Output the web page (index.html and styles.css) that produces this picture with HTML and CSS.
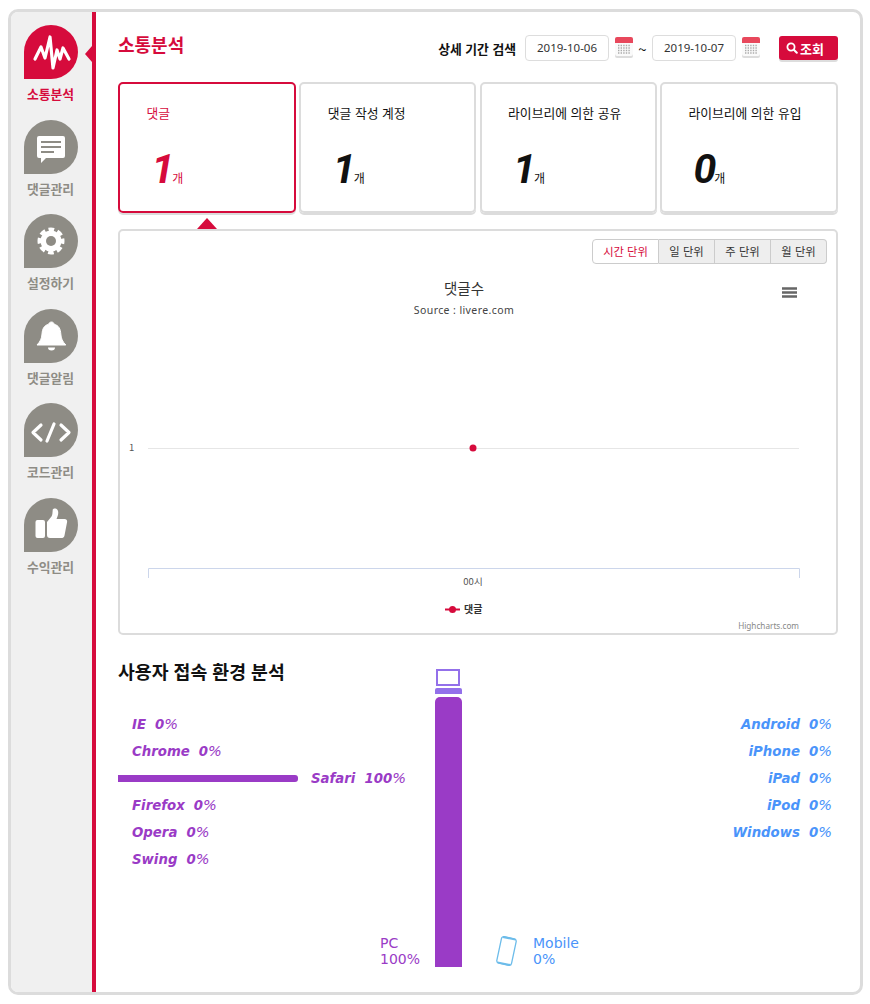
FILE: index.html
```html
<!DOCTYPE html>
<html lang="ko">
<head>
    <meta charset="UTF-8">
    <meta name="viewport" content="width=device-width, initial-scale=1.0">
    <title>소통분석</title>
    <link rel="stylesheet" href="styles.css">
</head>
<body>
    <svg class="defs" width="0" height="0">
        <symbol id="calendar" viewBox="0 0 18 22">
            <rect x="0" y="1" width="18" height="20" rx="2" fill="#dcdcdc"/>
            <rect x="0" y="0" width="18" height="19" rx="2" fill="#fafafa"/>
            <path d="M0 6V2a2 2 0 0 1 2-2h14a2 2 0 0 1 2 2v4z" fill="#e8485c"/>
            <path d="M3 8.5h12M3 11h12M3 13.500h12M3 16h12" stroke="#aaa" stroke-width="1.400" stroke-dasharray="1.400 1.200"/>
        </symbol>
    </svg>

    <div class="frame">
        <nav class="sidebar">
            <a class="nav-item active">
                <span class="nav-icon">
                    <svg viewBox="0 0 54 54"><polyline points="11,34 17,22 21,33 26,12 29,43 33,25 36,34 39,23 45,34" fill="none" stroke="#fff" stroke-width="3.200" stroke-linejoin="round" stroke-linecap="round"/></svg>
                </span>
                <span>소통분석</span>
            </a>
            <a class="nav-item">
                <span class="nav-icon">
                    <svg viewBox="0 0 54 54">
                        <path d="M15 16h24a2 2 0 0 1 2 2v18a2 2 0 0 1-2 2H22l-5 5v-5h-2a2 2 0 0 1-2-2V18a2 2 0 0 1 2-2z" fill="#fff"/>
                        <path d="M17 22h20M17 27h20M17 32h13" stroke="#8e8c85" stroke-width="2"/>
                    </svg>
                </span>
                <span>댓글관리</span>
            </a>
            <a class="nav-item">
                <span class="nav-icon">
                    <svg viewBox="0 0 54 54">
                        <circle cx="27" cy="27" r="10.500" fill="#fff"/>
                        <circle cx="27" cy="27" r="11.500" fill="none" stroke="#fff" stroke-width="4" stroke-dasharray="5.600 3.430" stroke-dashoffset="2.800"/>
                        <circle cx="27" cy="27" r="5" fill="#8e8c85"/>
                    </svg>
                </span>
                <span>설정하기</span>
            </a>
            <a class="nav-item">
                <span class="nav-icon">
                    <svg viewBox="0 0 54 54">
                        <path d="M27.500 13c1.500 0 2.500 1 2.500 2.200 5 1.200 6.500 5 6.800 9.800.3 4.500 1.700 7.500 5 11H13c3.300-3.500 4.700-6.500 5-11 .3-4.800 1.800-8.600 6.800-9.800 0-1.200 1.200-2.200 2.700-2.200z" fill="#fff" stroke="#fff" stroke-linejoin="round"/>
                        <path d="M24 38.500h7a3.500 3 0 0 1-7 0z" fill="#fff"/>
                    </svg>
                </span>
                <span>댓글알림</span>
            </a>
            <a class="nav-item">
                <span class="nav-icon">
                    <svg viewBox="0 0 54 54"><path d="M17 22l-8 7.500 8 7.500M30 21l-7 17M37 22l8 7.500-8 7.500" fill="none" stroke="#fff" stroke-width="3.200" stroke-linecap="round" stroke-linejoin="round"/></svg>
                </span>
                <span>코드관리</span>
            </a>
            <a class="nav-item">
                <span class="nav-icon">
                    <svg viewBox="0 0 54 54">
                        <rect x="11.500" y="22" width="9.500" height="18" rx="2" fill="#fff"/>
                        <path d="M23 24l4.500-5.500c1-1.500 1-4 1.200-6.500.1-2 4.300-2.300 5.300 1 .8 2.800-.5 6-1.500 8h8c2.500 0 3 2 2.400 4l-2.400 12.500c-.4 2-1.500 2.500-3.500 2.500H26c-2 0-3-1-3-3z" fill="#fff"/>
                    </svg>
                </span>
                <span>수익관리</span>
            </a>
        </nav>

        <main class="main">
            <header class="top">
                <h1 class="page-title">소통분석</h1>
                <div class="search">
                    <span class="search-label">상세 기간 검색</span>
                    <span class="date-input">2019-10-06</span>
                    <svg class="cal-icon"><use href="#calendar"/></svg>
                    <span class="tilde">~</span>
                    <span class="date-input">2019-10-07</span>
                    <svg class="cal-icon"><use href="#calendar"/></svg>
                    <button class="search-btn" type="button">
                        <svg viewBox="0 0 12 12" width="12" height="12"><circle cx="5" cy="5" r="3.600" fill="none" stroke="#fff" stroke-width="1.800"/><path d="M7.800 7.800l3 3" stroke="#fff" stroke-width="2" stroke-linecap="round"/></svg>
                        조회
                    </button>
                </div>
            </header>

            <section class="cards">
                <div class="card active">
                    <div class="card-label">댓글</div>
                    <div class="card-value"><b>1</b><span>개</span></div>
                </div>
                <div class="card">
                    <div class="card-label">댓글 작성 계정</div>
                    <div class="card-value"><b>1</b><span>개</span></div>
                </div>
                <div class="card">
                    <div class="card-label">라이브리에 의한 공유</div>
                    <div class="card-value"><b>1</b><span>개</span></div>
                </div>
                <div class="card">
                    <div class="card-label">라이브리에 의한 유입</div>
                    <div class="card-value"><b>0</b><span>개</span></div>
                </div>
            </section>

            <section class="chart-box">
                <div class="tabs">
                    <span class="tab active">시간 단위</span>
                    <span class="tab">일 단위</span>
                    <span class="tab">주 단위</span>
                    <span class="tab">월 단위</span>
                </div>
                <svg class="chart" width="716" height="369" viewBox="0 0 716 369">
                    <text x="344" y="30" text-anchor="middle" class="chart-title">댓글수</text>
                    <text x="344" y="50" text-anchor="middle" class="chart-sub">Source : livere.com</text>
                    <path d="M662 24.500h15M662 28.500h15M662 32.500h15" stroke="#666" stroke-width="2.400"/>
                    <text x="9" y="187" class="chart-small">1</text>
                    <path d="M28 184.500h651" stroke="#e6e6e6"/>
                    <circle cx="353" cy="184" r="3.500" fill="#d60b3c"/>
                    <path d="M28.500 314v-9.500h651v9.500" fill="none" stroke="#ccd6eb"/>
                    <text x="353" y="321" text-anchor="middle" class="chart-small">00시</text>
                    <path d="M325 345.500h15" stroke="#d60b3c" stroke-width="2"/>
                    <circle cx="332.500" cy="345.500" r="3.500" fill="#d60b3c"/>
                    <text x="344" y="349" class="chart-legend">댓글</text>
                    <text x="679" y="365" text-anchor="end" class="chart-credit">Highcharts.com</text>
                </svg>
            </section>

            <section class="env">
                <div class="env-left">
                    <h2 class="env-title">사용자 접속 환경 분석</h2>
                    <ul class="stat-list">
                        <li><b>IE</b><span><b>0</b>%</span></li>
                        <li><b>Chrome</b><span><b>0</b>%</span></li>
                        <li class="has-bar"><i class="stat-bar"></i><b>Safari</b><span><b>100</b>%</span></li>
                        <li><b>Firefox</b><span><b>0</b>%</span></li>
                        <li><b>Opera</b><span><b>0</b>%</span></li>
                        <li><b>Swing</b><span><b>0</b>%</span></li>
                    </ul>
                    <div class="total total-pc">PC<br>100%</div>
                </div>
                <div class="env-center">
                    <svg class="laptop" width="27" height="25" viewBox="0 0 27 25">
                        <rect x="2" y="1" width="22" height="15" fill="none" stroke="#9370ea" stroke-width="2"/>
                        <path d="M2 19h23a2 2 0 0 1 2 2v4H0v-4a2 2 0 0 1 2-2z" fill="#9370ea"/>
                    </svg>
                    <div class="env-bar"></div>
                </div>
                <div class="env-right">
                    <ul class="stat-list blue">
                        <li><b>Android</b><span><b>0</b>%</span></li>
                        <li><b>iPhone</b><span><b>0</b>%</span></li>
                        <li><b>iPad</b><span><b>0</b>%</span></li>
                        <li><b>iPod</b><span><b>0</b>%</span></li>
                        <li><b>Windows</b><span><b>0</b>%</span></li>
                    </ul>
                    <div class="mobile">
                        <svg width="23" height="30" viewBox="0 0 23 30">
                            <g transform="rotate(12 11.500 15)" fill="none" stroke="#6cbcea">
                                <rect x="4" y="1.500" width="15" height="27" rx="2.500" stroke-width="1.300"/>
                                <path d="M5 2h13M5 28h13" stroke-width="2"/>
                            </g>
                        </svg>
                        <div class="total">Mobile<br>0%</div>
                    </div>
                </div>
            </section>
        </main>
    </div>
</body>
</html>
```

FILE: styles.css
```css
* { box-sizing: border-box; }
body { margin: 9px 7px 9px 8px; background: #fff; font-family: "Noto Sans CJK KR", "Noto Sans", sans-serif; color: #111; }
.defs { position: absolute; }
.frame { display: flex; width: 855px; height: 986px; border: 3px solid #dcdcdc; border-radius: 10px; overflow: hidden; }

.sidebar { width: 85px; flex: none; padding-top: 13px; background: #f0f0f0; border-right: 4px solid #d60b3c; }
.nav-item { position: relative; display: flex; flex-direction: column; align-items: center; height: 94.6px; padding-right: 2px; font-size: 12.800px; font-weight: 700; line-height: 18px; color: #8e8c85; }
.nav-icon { display: block; width: 54px; height: 54px; margin-bottom: 6px; background: #8e8c85; border-radius: 50% 50% 50% 0; }
.nav-icon svg { display: block; width: 54px; height: 54px; }
.nav-item.active { color: #d60b3c; }
.nav-item.active .nav-icon { background: #d60b3c; }
.nav-item.active::after { content: ""; position: absolute; top: 21px; right: 0; border: 8px solid transparent; border-left: 0; border-right: 7px solid #d60b3c; }

.main { flex: 1; padding: 23px 22px 0; }
.top { display: flex; justify-content: space-between; align-items: flex-start; height: 26px; margin-bottom: 21px; }
.page-title { margin: 0; font-size: 18px; line-height: 18px; font-weight: 700; color: #d60b3c; }
.search { display: flex; align-items: center; height: 26px; }
.search-label { margin-right: 9px; font-size: 12.800px; font-weight: 700; }
.date-input { width: 84px; height: 26px; border: 1px solid #ddd; border-radius: 4px; font-size: 11.500px; line-height: 24px; text-align: center; color: #333; font-family: "Noto Sans", sans-serif; }
.cal-icon { width: 18px; height: 22px; margin-left: 6px; }
.tilde { width: 19px; text-align: center; font-size: 15px; }
.search-btn { display: flex; align-items: center; justify-content: flex-start; gap: 2px; width: 59px; height: 24px; margin-left: 19px; padding: 0 0 0 7px; border: none; border-radius: 3px; background: #d60b3c; box-shadow: 0 2px 0 #ddd; color: #fff; font: 700 13px "Noto Sans CJK KR", sans-serif; }

.cards { display: grid; grid-template-columns: 178px 177px 177px 178px; column-gap: 3.300px; }
.card { position: relative; height: 131px; padding: 20px 26.500px 0; border: 2px solid #dcdcdc; border-radius: 5px; box-shadow: 0 2px 0 #dcdcdc; }
.card-label { font-size: 12.800px; line-height: 18px; }
.card-value { display: flex; align-items: baseline; margin-top: 22px; padding-left: 5px; height: 50px; }
.card-value b { font: italic 700 41px/50px Roboto, sans-serif; letter-spacing: -3px; }
.card-value span { margin-left: 1px; font-size: 12px; }
.card.active { border-color: #d60b3c; color: #d60b3c; }
.card.active::after { content: ""; position: absolute; left: 77px; bottom: -18px; border: 10px solid transparent; border-top: 0; border-bottom: 11px solid #d60b3c; }

.chart-box { height: 406px; margin-top: 16px; border: 2px solid #dcdcdc; border-radius: 5px; }
.tabs { display: flex; justify-content: flex-end; height: 33px; padding: 8px 9px 0 0; }
.tab { width: 56px; height: 25px; border: 1px solid #ccc; border-left: 0; background: #eee; font-size: 11.300px; line-height: 23px; text-align: center; color: #333; }
.tab:last-child { border-radius: 0 4px 4px 0; }
.tab.active { width: 67px; border-left: 1px solid #ccc; border-radius: 4px 0 0 4px; background: #fff; color: #d60b3c; }
.chart { display: block; }
.chart-title { font-size: 14.500px; fill: #333; }
.chart-sub { font-family: "Noto Sans", sans-serif; font-size: 10.500px; letter-spacing: 0.4px; fill: #444; }
.chart-small { font-size: 9.500px; fill: #555; }
.chart-legend { font-size: 10px; font-weight: 700; fill: #333; }
.chart-credit { font-family: "Noto Sans", sans-serif; font-size: 8.200px; fill: #888; }

.env { display: grid; grid-template-columns: 317px 27px 1fr; height: 304px; margin-top: 28px; }
.env-left { display: flex; flex-direction: column; }
.env-title { margin: -2px 0 29.500px; font-size: 18.300px; line-height: 20px; font-weight: 700; }
.stat-list { margin: 0; padding: 0; list-style: none; color: #9a3bc6; font-family: "DejaVu Sans", sans-serif; font-size: 13.300px; line-height: 27px; font-style: italic; }
.stat-list li { display: flex; align-items: center; gap: 9px; height: 27px; padding-left: 14px; }
.stat-list b { font-weight: 700; }
.stat-list span { font-size: 14.500px; }
.stat-list span b { font-size: 13.300px; }
.stat-list li.has-bar { padding-left: 0; }
.stat-bar { width: 180px; height: 7px; margin-right: 4px; background: #9a3bc6; border-radius: 0 3px 3px 0; }
.stat-list.blue { color: #4a94fa; }
.stat-list.blue li { justify-content: flex-end; padding: 0 6px 0 0; }
.total { font-family: "DejaVu Sans", sans-serif; font-size: 14px; line-height: 16px; }
.total-pc { align-self: flex-end; margin: auto 15px 0 0; color: #9a3bc6; }
.env-center { display: flex; flex-direction: column; padding-top: 6px; }
.laptop { display: block; flex: none; margin-bottom: 3px; }
.env-bar { flex: 1; background: #9a3bc6; border-radius: 5px 5px 0 0; }
.env-right { display: flex; flex-direction: column; padding-top: 47.500px; }
.mobile { display: flex; align-items: center; gap: 15px; margin-top: auto; padding-left: 33px; color: #4a94fa; }
```
